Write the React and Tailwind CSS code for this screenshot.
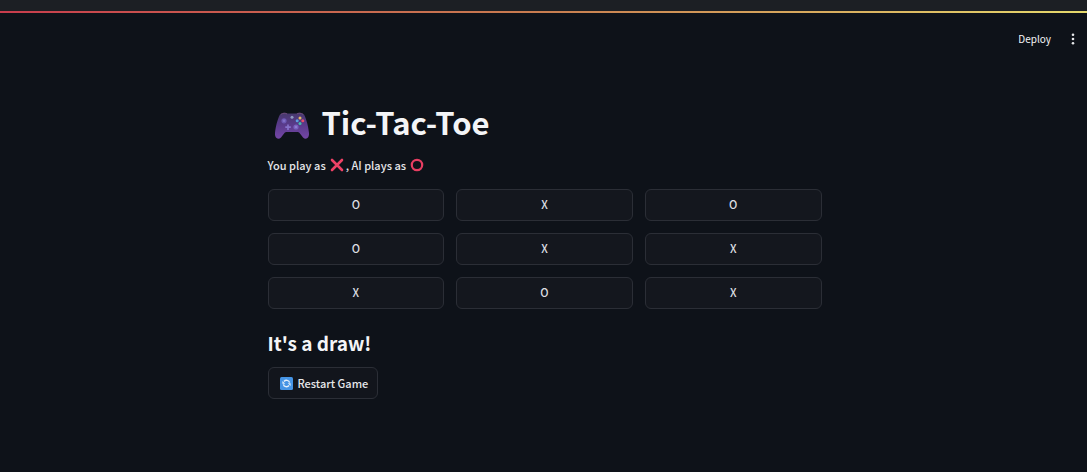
import { useState } from "react";

const START = ["O", "X", "O", "O", "X", "X", "X", "O", "X"];

function Gamepad() {
  return (
    <svg viewBox="0 0 36 30" className="mt-2 h-[30px] w-9 shrink-0" role="img" aria-label="Game controller">
      <defs>
        <linearGradient id="pad" x1="0" y1="0" x2="0" y2="1">
          <stop offset="0" stopColor="#46386c" />
          <stop offset="0.45" stopColor="#593a8a" />
          <stop offset="1" stopColor="#7446a6" />
        </linearGradient>
      </defs>
      <path d="M6 3.6C8 1.4 12 1.2 13.5 2.4H22.5C24 1.2 28 1.4 30 3.6C32.5 8 34.3 16 35 22C35.5 27 32 29.2 29 26.5C27 24.5 26 21.5 24 21H12C10 21.5 9 24.5 7 26.5C4 29.2 0.5 27 1 22C1.7 16 3.5 8 6 3.6Z" fill="url(#pad)" />
      <path d="M7 3.4C9 2 11.5 2 13 3M23 3C24.5 2 27 2 29 3.4" stroke="#6d4a78" strokeWidth="1" fill="none" />
      <circle cx="10" cy="9.8" r="2.6" fill="#6d58b4" />
      <circle cx="10" cy="9.8" r="1.3" fill="#8271c6" />
      <circle cx="22" cy="16" r="2.6" fill="#7960bd" />
      <circle cx="22" cy="16" r="1.3" fill="#8e7bcf" />
      <path d="M14 13.5V19M11.3 16.2H16.8" stroke="#8673cb" strokeWidth="1.7" />
      <circle cx="18" cy="6.3" r="1.5" fill="#8e9bc0" />
      <circle cx="26" cy="7" r="1.5" fill="#e5b965" />
      <circle cx="23.2" cy="9.8" r="1.5" fill="#5b9ee0" />
      <circle cx="28.8" cy="9.8" r="1.5" fill="#e64e6c" />
      <circle cx="26" cy="12.6" r="1.5" fill="#43c0ac" />
    </svg>
  );
}

function Cross() {
  return (
    <svg viewBox="0 0 14 14" className="size-3.5 shrink-0" role="img" aria-label="X">
      <path d="M2 2L12 12M12 2L2 12" stroke="#ee4266" strokeWidth="2.6" strokeLinecap="round" />
    </svg>
  );
}

function Ring() {
  return (
    <svg viewBox="0 0 14 14" className="size-3.5 shrink-0" role="img" aria-label="O">
      <circle cx="7" cy="7" r="5.2" fill="none" stroke="#e83e62" strokeWidth="2.2" />
    </svg>
  );
}

function Refresh() {
  return (
    <svg viewBox="0 0 13 13" className="size-[13px] shrink-0" aria-hidden="true">
      <rect width="13" height="13" rx="1.5" fill="#4594e5" />
      <path d="M3.4 7.3A3.2 3.2 0 0 0 9 8.5M9.6 5.7A3.2 3.2 0 0 0 4 4.5" fill="none" stroke="#e4f0fc" strokeWidth="1.4" />
      <path d="M2.4 4V6.8H5.2ZM10.6 9V6.2H7.8Z" fill="#e4f0fc" />
    </svg>
  );
}

export default function App() {
  const [board, setBoard] = useState(START);
  const full = board.every(Boolean);

  const play = (index) =>
    setBoard((cells) => cells.map((cell, i) => (i === index && !cell ? "X" : cell)));

  return (
    <div className="flex min-h-screen flex-col bg-[#0e1219] font-['Noto_Sans_CJK_SC',sans-serif] text-[11px] font-medium text-[#f4f5f7]">
      <div className="h-[11px] bg-[#1c1f24]" />
      <div className="h-0.5 bg-linear-to-r from-[#c93c4d] via-[#c87d50] to-[#e5d96c]" />
      <header className="flex h-[52px] items-center justify-end gap-4 pr-2">
        <button type="button" className="pb-0.5 text-[10px] font-normal">Deploy</button>
        <button type="button" aria-label="Main menu" className="flex w-3 justify-center">
          <svg viewBox="0 0 4 12" className="h-3 w-1" fill="#e6e7ea">
            <circle cx="2" cy="1.8" r="1.3" />
            <circle cx="2" cy="6" r="1.3" />
            <circle cx="2" cy="10.2" r="1.3" />
          </svg>
        </button>
      </header>
      <main className="pt-[34px] pr-4 pb-16 pl-[18px]">
        <div className="mx-auto max-w-[554px]">
          <h1 className="flex items-center gap-3 pl-1.5 text-[31px] leading-[46px] font-bold">
            <Gamepad />
            Tic-Tac-Toe
          </h1>
          <p className="mt-2.5 flex items-center leading-5 text-[#e6e7ea]">
            You play as
            <span className="mr-0.5 ml-1 flex"><Cross /></span>
            , AI plays as
            <span className="ml-1 flex"><Ring /></span>
          </p>
          <div className="mt-3.5 grid grid-cols-3 gap-3">
            {board.map((cell, index) => (
              <button
                key={index}
                type="button"
                aria-label={`Cell ${index + 1} ${cell}`}
                onClick={() => play(index)}
                className="h-8 rounded-md border border-[#2b2e36] bg-[#14171e] pb-0.5 text-[#dcdee2]"
              >
                {cell}
              </button>
            ))}
          </div>
          <h2 className="mt-[18px] text-[19px] leading-8 font-bold">{full ? "It's a draw!" : "Your turn"}</h2>
          <button
            type="button"
            onClick={() => setBoard(Array(9).fill(""))}
            className="mt-2 flex h-8 items-center gap-[5px] rounded-md border border-[#2b2e36] bg-[#12151c] pr-[9px] pl-[11px] text-[#e6e7ea]"
          >
            <Refresh />
            Restart Game
          </button>
        </div>
      </main>
    </div>
  );
}
